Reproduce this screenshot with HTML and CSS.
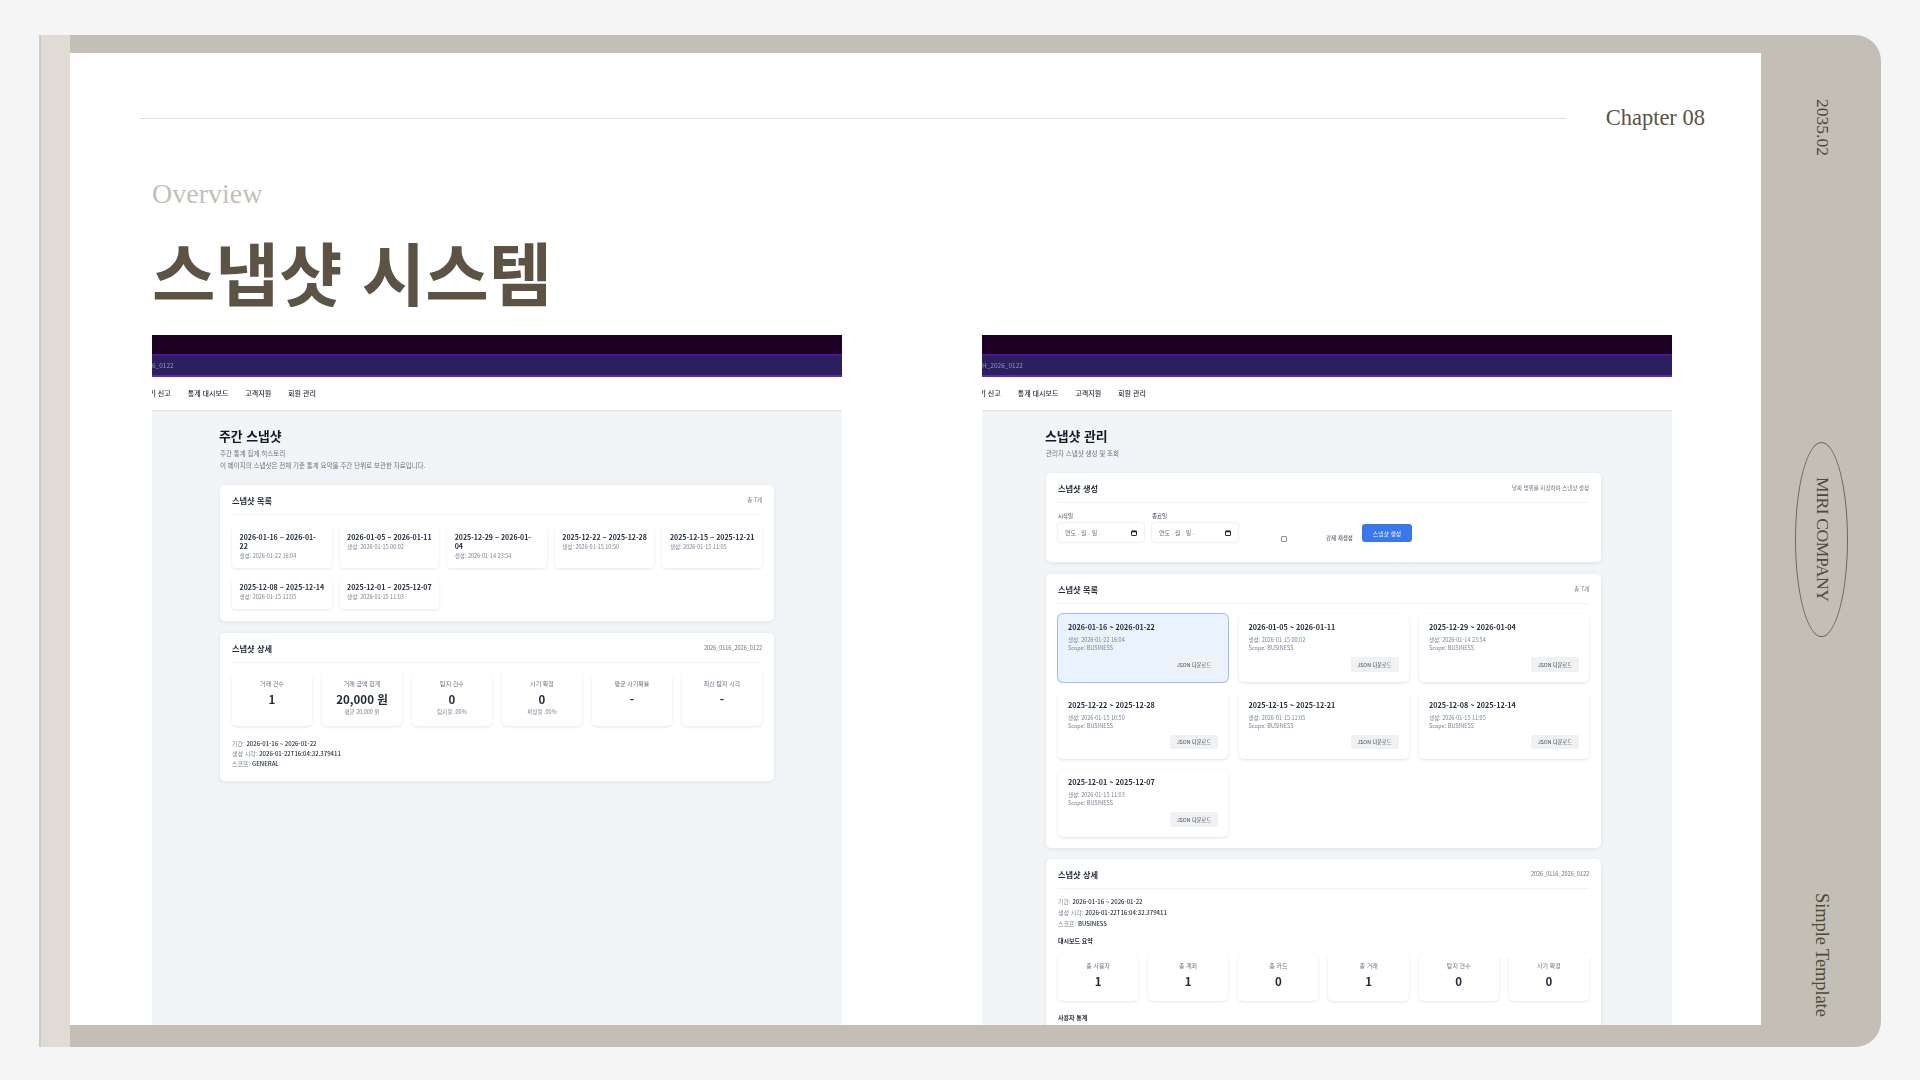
FILE: index.html
```html
<!DOCTYPE html>
<html lang="ko">
<head>
    <meta charset="UTF-8">
    <title>스냅샷 시스템</title>
    <link rel="stylesheet" href="styles.css">
</head>
<body>
    <div class="frame">
        <div class="strip"></div>

        <div class="sheet">
            <main class="page">
                <header class="page-head">
                    <div class="rule"></div>
                    <div class="chapter">Chapter 08</div>
                </header>
                <div class="overview">Overview</div>
                <h1 class="title">스냅샷 시스템</h1>

                <div class="shots">
                    <!-- left screenshot: weekly snapshots -->
                    <section class="shot">
                        <div class="shot-dark"></div>
                        <div class="shot-purple">6_0122</div>
                        <nav class="shot-nav">
                            <span class="nav-first">사기 신고</span>
                            <span>통계 대시보드</span>
                            <span>고객지원</span>
                            <span>회원 관리</span>
                        </nav>
                        <div class="shot-main">
                            <h2>주간 스냅샷</h2>
                            <p class="sub">주간 통계 집계 히스토리</p>
                            <p class="sub">이 페이지의 스냅샷은 전체 기준 통계 요약을 주간 단위로 보관한 자료입니다.</p>

                            <div class="card">
                                <div class="card-head"><h3>스냅샷 목록</h3><span>총 7개</span></div>
                                <div class="weeks">
                                    <div class="week"><b>2026-01-16 ~ 2026-01-<br>22</b><small>생성: 2026-01-22 16:04</small></div>
                                    <div class="week"><b>2026-01-05 ~ 2026-01-11</b><small>생성: 2026-01-15 00:02</small></div>
                                    <div class="week"><b>2025-12-29 ~ 2026-01-<br>04</b><small>생성: 2026-01-14 23:54</small></div>
                                    <div class="week"><b>2025-12-22 ~ 2025-12-28</b><small>생성: 2026-01-15 10:50</small></div>
                                    <div class="week"><b>2025-12-15 ~ 2025-12-21</b><small>생성: 2026-01-15 11:05</small></div>
                                    <div class="week"><b>2025-12-08 ~ 2025-12-14</b><small>생성: 2026-01-15 11:05</small></div>
                                    <div class="week"><b>2025-12-01 ~ 2025-12-07</b><small>생성: 2026-01-15 11:03</small></div>
                                </div>
                            </div>

                            <div class="card">
                                <div class="card-head"><h3>스냅샷 상세</h3><span>2026_0116_2026_0122</span></div>
                                <div class="stats">
                                    <div class="stat"><label>거래 건수</label><strong>1</strong></div>
                                    <div class="stat"><label>거래 금액 합계</label><strong>20,000 원</strong><small>평균 20,000 원</small></div>
                                    <div class="stat"><label>탐지 건수</label><strong>0</strong><small>탐지율 .00%</small></div>
                                    <div class="stat"><label>사기 확정</label><strong>0</strong><small>확정율 .00%</small></div>
                                    <div class="stat"><label>평균 사기확률</label><strong>-</strong></div>
                                    <div class="stat"><label>최신 탐지 시각</label><strong>-</strong></div>
                                </div>
                                <div class="info info-below">
                                    <div>기간: <em>2026-01-16 ~ 2026-01-22</em></div>
                                    <div>생성 시각: <em>2026-01-22T16:04:32.379411</em></div>
                                    <div>스코프: <em>GENERAL</em></div>
                                </div>
                            </div>
                        </div>
                    </section>

                    <!-- right screenshot: snapshot admin -->
                    <section class="shot">
                        <div class="shot-dark"></div>
                        <div class="shot-purple">H_2026_0122</div>
                        <nav class="shot-nav">
                            <span class="nav-first">사기 신고</span>
                            <span>통계 대시보드</span>
                            <span>고객지원</span>
                            <span>회원 관리</span>
                        </nav>
                        <div class="shot-main shot-main-admin">
                            <h2>스냅샷 관리</h2>
                            <p class="sub">관리자 스냅샷 생성 및 조회</p>

                            <div class="card card-form">
                                <div class="card-head"><h3>스냅샷 생성</h3><span>날짜 범위를 지정하여 스냅샷 생성</span></div>
                                <div class="form">
                                    <div class="field">
                                        <label>시작일</label>
                                        <div class="date">연도 . 월 . 일 .
                                            <svg width="6" height="6" viewBox="0 0 6 6"><rect x=".5" y="1" width="5" height="4.5" rx=".6" fill="none" stroke="#222"/><rect x=".5" y=".8" width="5" height="1.5" fill="#222"/></svg>
                                        </div>
                                    </div>
                                    <div class="field">
                                        <label>종료일</label>
                                        <div class="date">연도 . 월 . 일 .
                                            <svg width="6" height="6" viewBox="0 0 6 6"><rect x=".5" y="1" width="5" height="4.5" rx=".6" fill="none" stroke="#222"/><rect x=".5" y=".8" width="5" height="1.5" fill="#222"/></svg>
                                        </div>
                                    </div>
                                    <input type="checkbox" class="check">
                                    <span class="check-label">강제 재생성</span>
                                    <button class="btn-primary">스냅샷 생성</button>
                                </div>
                            </div>

                            <div class="card card-list">
                                <div class="card-head"><h3>스냅샷 목록</h3><span>총 7개</span></div>
                                <div class="snaps">
                                    <div class="snap snap-on"><b>2026-01-16 ~ 2026-01-22</b><small>생성: 2026-01-22 16:04</small><small>Scope: BUSINESS</small><button>JSON 다운로드</button></div>
                                    <div class="snap"><b>2026-01-05 ~ 2026-01-11</b><small>생성: 2026-01-15 00:02</small><small>Scope: BUSINESS</small><button>JSON 다운로드</button></div>
                                    <div class="snap"><b>2025-12-29 ~ 2026-01-04</b><small>생성: 2026-01-14 23:54</small><small>Scope: BUSINESS</small><button>JSON 다운로드</button></div>
                                    <div class="snap"><b>2025-12-22 ~ 2025-12-28</b><small>생성: 2026-01-15 10:50</small><small>Scope: BUSINESS</small><button>JSON 다운로드</button></div>
                                    <div class="snap"><b>2025-12-15 ~ 2025-12-21</b><small>생성: 2026-01-15 11:05</small><small>Scope: BUSINESS</small><button>JSON 다운로드</button></div>
                                    <div class="snap"><b>2025-12-08 ~ 2025-12-14</b><small>생성: 2026-01-15 11:05</small><small>Scope: BUSINESS</small><button>JSON 다운로드</button></div>
                                    <div class="snap"><b>2025-12-01 ~ 2025-12-07</b><small>생성: 2026-01-15 11:03</small><small>Scope: BUSINESS</small><button>JSON 다운로드</button></div>
                                </div>
                            </div>

                            <div class="card card-after">
                                <div class="card-head"><h3>스냅샷 상세</h3><span>2026_0116_2026_0122</span></div>
                                <div class="info info-tight">
                                    <div>기간: <em>2026-01-16 ~ 2026-01-22</em></div>
                                    <div>생성 시각: <em>2026-01-22T16:04:32.379411</em></div>
                                    <div>스코프: <em>BUSINESS</em></div>
                                </div>
                                <h4>대시보드 요약</h4>
                                <div class="stats stats-short">
                                    <div class="stat"><label>총 사용자</label><strong>1</strong></div>
                                    <div class="stat"><label>총 계좌</label><strong>1</strong></div>
                                    <div class="stat"><label>총 카드</label><strong>0</strong></div>
                                    <div class="stat"><label>총 거래</label><strong>1</strong></div>
                                    <div class="stat"><label>탐지 건수</label><strong>0</strong></div>
                                    <div class="stat"><label>사기 확정</label><strong>0</strong></div>
                                </div>
                                <h4 class="h4-next">사용자 통계</h4>
                            </div>
                        </div>
                    </section>
                </div>
            </main>
        </div>

        <aside class="band">
            <div class="band-top">2035.02</div>
            <div class="oval">MIRI COMPANY</div>
            <div class="band-bottom">Simple Template</div>
        </aside>
    </div>
</body>
</html>
```

FILE: styles.css
```css
/* slide frame */
html, body { margin: 0; height: 100%; }
body { background: #f5f5f5; padding: 35px 39px 33px; box-sizing: border-box; overflow: hidden; font-family: "Noto Sans CJK KR", sans-serif; }
.frame { display: flex; height: 100%; }
.strip { width: 31px; background: #e0dcd5; border-left: 2px solid #cfcbc3; box-sizing: border-box; }
.sheet { flex: 1; min-width: 0; display: flex; flex-direction: column; background: #c3beb6; padding: 18px 0 22px; }
.band { width: 120px; background: #c3beb6; border-radius: 0 26px 26px 0; display: grid; grid-template-rows: 1fr auto 1fr; justify-items: center; font-family: "Liberation Serif", serif; color: #4f4739; }
.band-top, .band-bottom, .oval { writing-mode: vertical-rl; }
.band-top { font-size: 17.5px; padding: 64px 0 0 3px; }
.band-bottom { font-size: 18.5px; align-self: end; padding-bottom: 30px; letter-spacing: -.1px; }
.oval { width: 53px; height: 195px; margin-bottom: 3px; padding-left: 2px; box-sizing: border-box; border: 1px solid #6e675b; border-radius: 50%; display: flex; align-items: center; justify-content: center; font-size: 17.5px; letter-spacing: -.4px; }

/* page */
.page { flex: 1; min-height: 0; display: flex; flex-direction: column; background: #fff; padding: 50px 56px 0 70px; }
.page-head { display: flex; align-items: center; gap: 40px; height: 30px; }
.rule { flex: 1; height: 1px; background: #e3dfd8; }
.chapter { font-family: "Liberation Serif", serif; font-size: 22.5px; color: #5c5344; }
.overview { font-family: "Liberation Serif", serif; font-size: 28px; line-height: 34px; color: #c4bfb6; margin: 44px 0 0 12px; }
.title { font-size: 69px; line-height: 80px; font-weight: 700; color: #5c5344; margin: 20px 0 0 12px; }
.shots { flex: 1; min-height: 0; display: flex; gap: 140px; margin: 24px 0 0 12px; }

/* screenshots */
.shot { width: 690px; display: flex; flex-direction: column; overflow: hidden; background: #f1f5f8; filter: blur(.6px); color: #1f2937; }
.shot-dark { height: 19px; background: #1f0025; flex: none; }
.shot-purple { height: 23px; flex: none; box-sizing: border-box; background: #2b1f5e; border-top: 2px solid #42189c; border-bottom: 2px solid #5a28c8; font-size: 6.5px; line-height: 19px; color: #9c94bd; white-space: nowrap; }
.shot-nav { height: 33px; flex: none; box-sizing: border-box; padding-bottom: 2px; display: flex; align-items: center; gap: 17px; background: #fff; font-size: 7px; font-weight: 500; box-shadow: 0 1px 2px rgba(0,0,0,.08); position: relative; }
.nav-first { margin-left: -9px; }
.shot-main { flex: 1; min-height: 0; padding: 18px 68px 0; }
.shot-main-admin { padding: 18px 71px 0 64px; }
h2 { font-size: 12.8px; line-height: 16px; font-weight: 700; margin: 0 0 3px -1px; color: #111827; }
.sub { font-size: 6.5px; line-height: 12px; margin: 0; color: #6b7280; }

/* cards */
.card { background: #fff; border-radius: 5px; padding: 9px 12px 12px; margin-top: 12px; box-shadow: 0 1px 4px rgba(0,0,0,.08); }
.sub + .card { margin-top: 14px; }
.card-form { padding-bottom: 20px; }
.card-list { padding-bottom: 11px; }
.card-after { margin-top: 11px; }
.card-head { display: flex; justify-content: space-between; align-items: center; height: 20px; border-bottom: 1px solid #f1f3f5; margin-bottom: 9px; }
.card-head h3 { font-size: 8.2px; line-height: 12px; font-weight: 700; margin: 0 0 8px; }
.card-head span { font-size: 5.5px; color: #6b7280; margin-bottom: 8px; }

/* weekly list */
.weeks { display: grid; grid-template-columns: repeat(5, 1fr); gap: 9px 8px; margin-top: 11px; align-items: stretch; }
.week { padding: 6.5px 7.5px 8px; border-radius: 4px; box-shadow: 0 1px 3px rgba(0,0,0,.1); }
.week b { display: block; font-size: 7px; line-height: 9px; font-weight: 600; white-space: nowrap; }
.week small { display: block; font-size: 5.5px; line-height: 7px; margin-top: 2px; color: #7b8494; }

/* stat boxes */
.stats { display: grid; grid-template-columns: repeat(6, 1fr); gap: 10px; margin-top: -1px; }
.stats-short { margin-top: 0; }
.stat { padding: 9px 4px 10.5px; border-radius: 5px; text-align: center; box-shadow: 0 1px 3px rgba(0,0,0,.1); }
.stat label { display: block; font-size: 6px; line-height: 8px; color: #6b7280; }
.stat strong { display: block; font-size: 11.5px; line-height: 14px; font-weight: 700; margin-top: 4px; }
.stat small { display: block; font-size: 5.5px; line-height: 7px; margin-top: 2.5px; color: #7b8494; }
.stats-short .stat { padding-bottom: 13px; }

/* key value lines */
.info { font-size: 6px; line-height: 10px; color: #7b8494; }
.info em { font-style: normal; font-weight: 500; color: #1f2937; }
.info-below { margin-top: 13px; }
.info-tight { line-height: 11px; margin-top: -2px; }
h4 { font-size: 6px; line-height: 8px; font-weight: 600; margin: 8px 0; }
.h4-next { margin-top: 13px; }

/* snapshot form */
.form { display: flex; align-items: flex-end; gap: 8px; margin-top: 9px; }
.field label { display: block; font-size: 5.5px; line-height: 8px; margin-bottom: 3px; color: #374151; }
.date { width: 86px; height: 19px; box-sizing: border-box; padding: 0 7px; display: flex; align-items: center; justify-content: space-between; font-size: 6px; color: #6b7280; border-radius: 3px; box-shadow: 0 0 2px rgba(0,0,0,.22); }
.check { appearance: none; width: 6px; height: 6px; margin: 0 0 0 35px; border: 1px solid #8a8f98; border-radius: 1px; box-sizing: border-box; }
.check-label { font-size: 5.5px; line-height: 8px; width: 28px; white-space: nowrap; margin-left: 31px; color: #374151; }
button { font-family: inherit; border: 0; }
.btn-primary { width: 50px; height: 18px; padding: 0; background: #3b76ea; color: #fff; font-size: 5.8px; border-radius: 3px; }

/* snapshot list */
.snaps { display: grid; grid-template-columns: repeat(3, 1fr); gap: 10px 10.5px; margin-top: 10px; }
.snap { display: flex; flex-direction: column; height: 67.5px; box-sizing: border-box; padding: 8px 10px 10px; border-radius: 5px; box-shadow: 0 1px 3px rgba(0,0,0,.12); }
.snap b { font-size: 7.2px; line-height: 10px; font-weight: 600; margin-bottom: 4px; }
.snap small { font-size: 5.5px; line-height: 8px; color: #7b8494; }
.snap button { width: 48px; height: 15px; padding: 0; margin: 5px 0 0 auto; background: #f0f1f3; color: #374151; font-size: 5.2px; border-radius: 2px; }
.snap-on { background: #eaf2fe; box-shadow: 0 0 0 1px #9dbcf5; }
```
